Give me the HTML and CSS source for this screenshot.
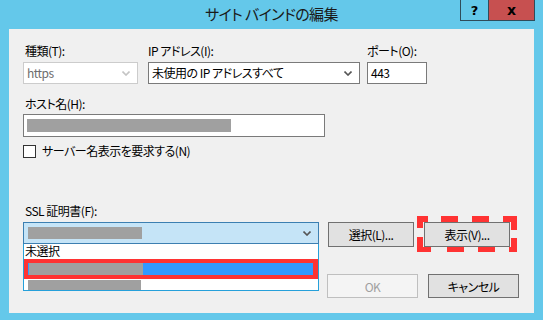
FILE: index.html
```html
<!DOCTYPE html>
<html lang="ja">
<head>
    <meta charset="UTF-8">
    <title>サイト バインドの編集</title>
    <link rel="stylesheet" href="styles.css">
</head>
<body>

<div class="window">
    <div class="titlebar">
        <span></span>
        <h1 class="title">サイト バインドの編集</h1>
        <div class="caption-btns">
            <span class="cap help">?</span>
            <span class="cap close">x</span>
        </div>
    </div>

    <div class="panel">
        <div class="row-top">
            <div class="field">
                <label>種類(T):</label>
                <div class="combo disabled">
                    <span>https</span>
                    <svg class="arrow" width="8" height="5" viewBox="0 0 8 5"><polyline points="0.5,0.5 4,4 7.5,0.5" fill="none" stroke="#c4c4c4" stroke-width="1.6"/></svg>
                </div>
            </div>
            <div class="field">
                <label>IP アドレス(I):</label>
                <div class="combo">
                    <span>未使用の IP アドレスすべて</span>
                    <svg class="arrow" width="8" height="5" viewBox="0 0 8 5"><polyline points="0.5,0.5 4,4 7.5,0.5" fill="none" stroke="#555" stroke-width="1.6"/></svg>
                </div>
            </div>
            <div class="field">
                <label>ポート(O):</label>
                <div class="textbox">443</div>
            </div>
        </div>

        <label class="host-label">ホスト名(H):</label>
        <div class="textbox host"><span class="redact host-redact"></span></div>

        <div class="check-row">
            <span class="checkbox"></span>
            <span>サーバー名表示を要求する(N)</span>
        </div>

        <label class="ssl-label">SSL 証明書(F):</label>
        <div class="ssl-row">
            <div class="cert">
                <div class="combo open">
                    <span class="redact cert-redact"></span>
                    <svg class="arrow" width="8" height="5" viewBox="0 0 8 5"><polyline points="0.5,0.5 4,4 7.5,0.5" fill="none" stroke="#555" stroke-width="1.6"/></svg>
                </div>
                <ul class="cert-list">
                    <li class="item">未選択</li>
                    <li class="item selected"><span class="redact cert-redact"></span></li>
                    <li class="item last"><span class="redact cert-redact"></span></li>
                </ul>
            </div>
            <div class="actions">
                <div class="btn-row">
                    <button class="btn">選択(L)...</button>
                    <div class="marked">
                        <button class="btn">表示(V)...</button>
                        <svg class="dash-box" width="100" height="36" viewBox="0 0 100 36">
                            <g fill="#ff3333">
                                <rect x="0" y="0" width="11" height="6"/>
                                <rect x="24" y="0" width="17" height="6"/>
                                <rect x="55" y="0" width="17" height="6"/>
                                <rect x="86" y="0" width="14" height="6"/>
                                <rect x="0" y="31" width="14" height="5"/>
                                <rect x="30" y="31" width="17" height="5"/>
                                <rect x="61" y="31" width="17" height="5"/>
                                <rect x="92" y="31" width="8" height="5"/>
                                <rect x="0" y="0" width="6" height="12"/>
                                <rect x="0" y="21" width="6" height="15"/>
                                <rect x="94" y="0" width="6" height="14"/>
                                <rect x="94" y="22" width="6" height="14"/>
                            </g>
                        </svg>
                    </div>
                </div>
                <div class="btn-row bottom">
                    <button class="btn wide" disabled>OK</button>
                    <button class="btn wide">キャンセル</button>
                </div>
            </div>
        </div>
    </div>
</div>

</body>
</html>
```

FILE: styles.css
```css
body {
    margin: 0;
    font-family: "Noto Sans CJK JP", "Noto Sans", sans-serif;
    font-size: 12px;
    font-feature-settings: "palt";
    letter-spacing: -0.5px;
    color: #000;
}
.window {
    width: 543px;
    height: 320px;
    box-sizing: border-box;
    background: #64c8ea;
    padding: 0 9px 7px 9px;
    display: flex;
    flex-direction: column;
}
.titlebar {
    height: 29px;
    display: grid;
    grid-template-columns: 1fr auto 1fr;
    align-items: start;
}
.title {
    margin: 4px 0 0;
    font-size: 15px;
    font-weight: normal;
    line-height: 20px;
    letter-spacing: -0.6px;
    color: #1a1a1a;
}
.caption-btns {
    justify-self: end;
    display: flex;
    margin-right: -1px;
    border: 1px solid #2f4c5a;
    border-top: 0;
}
.cap {
    height: 20px;
    display: flex;
    align-items: center;
    justify-content: center;
    font-family: "DejaVu Sans", sans-serif;
    font-weight: bold;
    font-size: 13px;
    letter-spacing: 0;
}
.help {
    width: 27px;
    border-right: 1px solid #2f4c5a;
}
.close {
    width: 45px;
    background: #c75050;
    font-size: 14px;
}
.panel {
    flex: 1;
    background: #f0f0f0;
    padding: 14px 0 0 14px;
}
label {
    display: block;
    line-height: 16px;
    padding-left: 2px;
}
.row-top {
    display: grid;
    grid-template-columns: 115px 212px 57px;
    column-gap: 10px;
}
.row-top .field:last-child {
    margin-left: -3px;
}
.row-top label {
    margin-bottom: 3px;
}
.row-top .field:nth-child(2) label,
.row-top .field:last-child label {
    padding-left: 0;
}
.combo, .textbox {
    height: 22px;
    box-sizing: border-box;
    border: 1px solid #7a7a7a;
    background: #fff;
    display: flex;
    align-items: center;
    padding: 0 7px 0 3px;
    line-height: 16px;
}
.combo span:first-child {
    flex: 1;
}
.combo.disabled {
    border-color: #cccccc;
    color: #6d6d6d;
}
.arrow {
    display: block;
}
.host-label {
    margin-top: 12px;
}
.textbox.host {
    margin-top: 2px;
    width: 302px;
    height: 23px;
    padding-left: 3px;
}
.redact {
    display: block;
    background: #a0a0a0;
}
.host-redact {
    width: 204px;
    height: 13px;
}
.check-row {
    margin-top: 6px;
    display: flex;
    align-items: center;
    gap: 6px;
    line-height: 16px;
}
.checkbox {
    width: 13px;
    height: 13px;
    box-sizing: border-box;
    border: 1px solid #333;
    background: #fff;
}
.ssl-label {
    margin-top: 44px;
}
.ssl-row {
    margin-top: 3px;
    display: flex;
    gap: 9px;
}
.cert {
    width: 296px;
}
.combo.open {
    background: #c5e4f7;
    border-color: #3c7fb1;
    padding-left: 4px;
}
.cert-redact {
    width: 114px;
    height: 12px;
}
.combo.open .cert-redact {
    flex: none;
    margin-right: auto;
}
.cert-list {
    list-style: none;
    margin: 0;
    padding: 0;
    height: 47px;
    box-sizing: border-box;
    border: 1px solid #26a0da;
    border-top: 0;
    background: #fff;
}
.item {
    height: 15px;
    line-height: 14px;
    padding-left: 1px;
}
.item.selected {
    height: 20px;
    box-sizing: border-box;
    border: 4px solid #ff3333;
    border-right-width: 5px;
    background: #3399ff;
    padding-left: 1px;
}
.item.selected .cert-redact {
    height: 12px;
}
.item.last {
    height: 11px;
    padding: 1px 0 0 4px;
    box-sizing: border-box;
}
.item.last .cert-redact {
    height: 10px;
    width: 113px;
}
.actions {
    display: flex;
    flex-direction: column;
}
.btn-row {
    display: flex;
    gap: 10px;
}
.btn-row.bottom {
    margin-top: 27px;
    margin-left: -1px;
}
.btn {
    width: 86px;
    height: 25px;
    margin: 0;
    padding: 0;
    border: 1px solid #707070;
    background: #e1e1e1;
    font-family: inherit;
    font-size: 12px;
    font-feature-settings: "palt";
    letter-spacing: -0.5px;
    color: #000;
}
.btn.wide {
    width: 91px;
    height: 24px;
}
.btn[disabled] {
    background: #f4f4f4;
    border-color: #bfbfbf;
    color: #a0a0a0;
}
.marked {
    position: relative;
}
.dash-box {
    position: absolute;
    left: -7px;
    top: -6px;
}
```
